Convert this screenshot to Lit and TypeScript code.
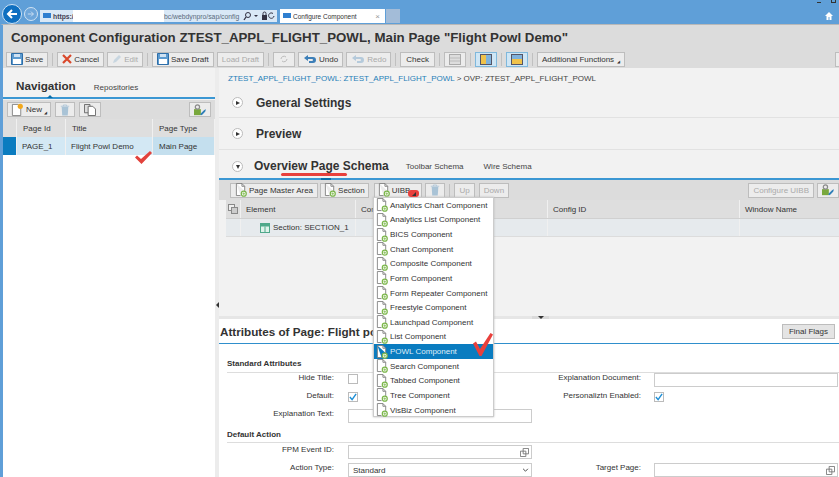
import { LitElement, html, css } from "lit";
import { customElement } from "lit/decorators.js";

const addDoc = () => html`<svg class="ic" viewBox="1 0 13 15" width="12" height="14"><path d="M2.500 .5h6l3 3v5M2.500 .5v13h4.500" fill="#fff" stroke="#777" stroke-width=".9"/><path d="M8.500 .5v3h3" fill="none" stroke="#777" stroke-width=".9"/><circle cx="10.500" cy="11.500" r="2.700" fill="#fff" stroke="#7ab648" stroke-width="1.300"/><path d="M10.500 10v3M9 11.500h3" stroke="#7ab648" stroke-width=".8"/></svg>`;
const newDoc = html`<svg class="ic" viewBox="1 0 14 15" width="13" height="14"><path d="M2.500 1.500h6l3 3v9h-9z" fill="#fff" stroke="#777" stroke-width=".9"/><circle cx="11" cy="3.500" r="2.800" fill="#f2a81d"/></svg>`;
const trash = (c = "#a9c3d6") => html`<svg viewBox="0 0 12 14" width="10" height="12"><path d="M1 2.500h10M4 2.500V1h4v1.500" stroke="${c}" fill="none"/><path d="M2 3.500h8l-.7 10H2.700z" fill="${c}"/></svg>`;
const settings = () => html`<svg viewBox="0 0 16 14" width="14" height="12"><rect x="1" y="6" width="8" height="7" fill="#79a83c"/><circle cx="5" cy="3.500" r="2.500" fill="none" stroke="#8a8a8a" stroke-width="1.400"/><path d="M8 12l5-5 2-1-1 3-4 4z" fill="#2f7fb8"/></svg>`;
const bigCheck = (w: number, h: number) => html`<svg viewBox="0 0 20 23" width="${w}" height="${h}"><path d="M0 10.500L3 8.500L7 16L17.500 0L20 1.500L8.500 23H6.500z" fill="#e8403c"/></svg>`;
const smallCheck = html`<svg viewBox="0 0 17 14" width="17" height="14"><path d="M0 7.500L2 5.500L6 9L15 1L17 3L6.500 14z" fill="#e2423c"/></svg>`;
const blueCheck = html`<svg viewBox="0 0 9 9" width="8" height="8"><path d="M1 4.500L3.500 7.500L8 1" fill="none" stroke="#1e8fd6" stroke-width="1.600"/></svg>`;
const copyIc = html`<svg viewBox="0 0 10 10" width="9" height="9"><path d="M3.500 .5h6v6h-6zM.5 3.500h6v6h-6z" fill="#fff" stroke="#777"/></svg>`;
const menuItems = ["Analytics Chart Component", "Analytics List Component", "BICS Component", "Chart Component", "Composite Component", "Form Component", "Form Repeater Component", "Freestyle Component", "Launchpad Component", "List Component", "POWL Component", "Search Component", "Tabbed Component", "Tree Component", "VisBiz Component"];

@customElement("app-root")
export class AppRoot extends LitElement {
  static styles = css`
    :host { display: block; width: 839px; height: 477px; overflow: hidden; position: relative; font-family: "Liberation Sans", Arial, sans-serif; color: #333; font-size: 8px; background: #f2f2f2; }
    * { box-sizing: border-box; }
    .chrome { height: 24px; background: #5f9fd8; display: flex; align-items: flex-start; position: relative; }
    .back { width: 20px; height: 20px; border-radius: 50%; background: #0f6fc0; border: 1px solid #cfe2f3; margin: 4px 0 0 2px; display: flex; align-items: center; justify-content: center; flex: none; }
    .fwd { width: 14px; height: 14px; border-radius: 50%; border: 1px solid #cfe2f3; background: #6ea6da; margin: 7px 0 0 2px; display: flex; align-items: center; justify-content: center; flex: none; }
    .addr { margin: 10px 0 0 2px; width: 237px; height: 12px; background: #d9e8f6; display: flex; align-items: center; font-size: 6.800px; color: #333; padding-left: 13px; position: relative; flex: none; }
    .addr .scheme { width: 20px; font-weight: bold; color: #445; }
    .addr .mask { width: 91px; height: 12px; background: #fff; flex: none; }
    .addr .tail { color: #5a6b7c; white-space: nowrap; }
    .addr .tools { position: absolute; right: 2px; top: 1px; }
    .sap { position: absolute; left: 3px; top: 3px; width: 8px; height: 5px; background: #2f7fd0; }
    .tab { margin: 9px 0 0 3px; width: 105px; height: 14px; background: #fff; display: flex; align-items: center; padding-left: 13px; font-size: 6.500px; color: #333; position: relative; flex: none; }
    .tab .sap { top: 4px; }
    .tab .x { position: absolute; right: 5px; color: #999; font-size: 8px; }
    .newtab { margin: 9px 0 0 1px; width: 14px; height: 14px; background: #a3bcd8; }
    .winicons { position: absolute; right: 0; top: 0; width: 30px; height: 24px; }
    .win-a { position: absolute; left: 8px; top: 2px; width: 4px; height: 1px; background: #333; }
    .win-b { position: absolute; left: 22px; top: 0; width: 5px; height: 3px; border: 1px solid #333; border-top: 0; }
    .win-c { position: absolute; left: 16px; top: 12px; }

    .title { height: 26px; background: #dcdcdc; border-top: 1px solid #b8b8b8; border-left: 3px solid #5f9fd8; padding: 5px 0 0 8px; font-size: 13.300px; font-weight: bold; color: #333; white-space: nowrap; }
    .bar { display: flex; align-items: center; gap: 3px; white-space: nowrap; }
    .mainbar { height: 18px; background: #dcdcdc; padding-left: 3px; border-left: 3px solid #5f9fd8; }
    .btn { height: 15px; border: 1px solid #bdbdbd; background: #ececec; display: flex; align-items: center; gap: 2px; padding: 0 4px; font-size: 8px; color: #333; flex: none; }
    .btn.off { color: #aaa; }
    .btn.on { background: #cfe6f5; border-color: #7fb8dc; }
    .btn.layout { width: 22px; padding: 0; justify-content: center; }
    .btn.wide { padding: 0 5px; }
    .tail-btn { margin-left: auto; margin-right: -6px; width: 10px; }
    .sep { width: 1px; height: 13px; background: #c0c0c0; margin: 0 1px; flex: none; }
    .body { display: flex; height: 409px; }
    .left { width: 215px; background: #f2f2f2; border-left: 3px solid #5f9fd8; flex: none; display: flex; flex-direction: column; }
    .tabs { height: 31px; display: flex; align-items: flex-end; padding: 0 0 5px 13px; gap: 18px; border-bottom: 2px solid #3b97d3; position: relative; flex: none; }
    .tabs b { font-size: 11.700px; color: #333; }
    .tabs span { font-size: 8px; color: #444; }
    .notch { position: absolute; left: 44px; bottom: -1px; width: 0; height: 0; border: 3px solid transparent; border-bottom-color: #0a6ea8; border-top: 0; }
    .ltool { height: 19px; background: #dcdcdc; padding: 0 4px; display: flex; align-items: center; gap: 4px; flex: none; margin-top: 1px; }
    .hdr { display: flex; height: 18px; background: #dedede; flex: none; }
    .hdr > div, .lrow > div { border-right: 1px solid #f0f0f0; display: flex; align-items: center; padding-left: 6px; font-size: 8px; white-space: nowrap; }
    .lrow { display: flex; height: 18px; background: #d3e8f4; flex: none; }
    .lrow .sel { background: #0a7cc0; }
    .lrow .typ { background: #c4dfee; }
    .c0 { width: 14px; padding: 0 !important; } .c1 { width: 49px; } .c2 { width: 87px; } .c3 { flex: 1; }
    .lrow .c1, .lrow .c2 { padding-left: 5px; }
    .lwhite { flex: 1; background: #fff; }
    .split { width: 4px; background: #ececec; flex: none; display: flex; align-items: flex-start; justify-content: center; padding-top: 234px; }
    .split i { width: 0; height: 0; border: 3px solid transparent; border-right-color: #333; border-left: 0; }
    .right { flex: 1; min-width: 0; display: flex; flex-direction: column; background: #f2f2f2; }
    .upper { height: 248px; flex: none; position: relative; }
    .crumb { height: 20px; padding: 6px 0 0 9px; font-size: 8px; white-space: nowrap; color: #444; }
    .crumb a { color: #1f7fb8; }
    .panel { height: 32px; display: flex; align-items: center; gap: 13px; padding-left: 13px; font-size: 12px; font-weight: bold; color: #333; border-bottom: 1px solid #e2e2e2; }
    .panel.first { height: 30px; }
    .circ { width: 11px; height: 11px; border-radius: 50%; background: #fff; border: 1px solid #bbb; display: flex; align-items: center; justify-content: center; flex: none; }
    .circ .r { width: 0; height: 0; border: 2.500px solid transparent; border-left: 4px solid #333; border-right: 0; }
    .circ .d { width: 0; height: 0; border: 2.500px solid transparent; border-top: 4px solid #333; border-bottom: 0; }
    .ovp { height: 30px; display: flex; align-items: flex-end; padding: 0 0 5px 13px; gap: 11px; border-bottom: 2px solid #3b97d3; position: relative; }
    .ovp b { font-size: 12px; margin-right: 6px; }
    .ovp .sub { font-size: 8px; padding-bottom: 2px; margin-right: 9px; color: #444; }
    .notch2 { position: absolute; left: 102px; bottom: -2px; width: 10px; height: 2px; background: #0a6ea8; }
    .utool { height: 20px; background: #dcdcdc; padding: 0 0 0 11px; }
    .utool .pma { margin-right: -1px; }
    .utool .sec { padding: 0 3px; margin-right: 2px; }
    .utool .uibb { padding: 0 11px 0 3px; }
    .utool .end { margin-left: auto; }
    .uh { display: flex; height: 19px; background: #dedede; margin-left: 7px; border-bottom: 1px solid #d0d0d0; }
    .ur { display: flex; height: 18px; background: #e6eaed; margin-left: 7px; border-bottom: 1px solid #dcdcdc; }
    .uh > div, .ur > div { border-right: 1px solid #f0f0f0; display: flex; align-items: center; padding-left: 5px; white-space: nowrap; flex: none; font-size: 8px; }
    .k0 { width: 15px; padding-left: 2px !important; } .k1 { width: 115px; } .k2 { width: 192px; } .k3 { width: 192px; } .k4 { width: 120px; }
    .ur .k1 { padding-left: 19px; gap: 3px; }
    .lower { flex: 1; background: #fff; border-top: 3px solid #e6e6e6; }
    .ah { height: 25px; display: flex; align-items: center; justify-content: space-between; padding: 0 4px 0 1px; border-bottom: 1px solid #2f8fcc; }
    .ah b { font-size: 11.700px; color: #333; }
    .ah .btn { background: #e4e4e4; padding: 0 6px; }
    .content { padding-left: 8px; }
    .group { height: 29px; padding-top: 15px; font-size: 8px; font-weight: bold; border-bottom: 1px solid #ddd; color: #333; line-height: 10px; }
    .group.second { height: 16px; padding-top: 3px; }
    .form { display: grid; grid-template-columns: 107px 14px 184px 109px 13px 184px; align-items: start; grid-auto-rows: 18px; }
    .form.second { margin-top: 2px; }
    .lbl { text-align: right; font-size: 8px; line-height: 10px; white-space: nowrap; }
    .input { height: 14px; border: 1px solid #ccc; background: #fff; display: flex; align-items: center; justify-content: flex-end; padding: 0 2px 0 4px; font-size: 8px; }
    .input.sel { justify-content: space-between; }
    .cb { width: 10px; height: 10px; border: 1px solid #bbb; background: #fff; display: flex; align-items: center; justify-content: center; margin-top: 1px; }
    .menu { position: absolute; left: 373px; top: 197px; width: 121px; height: 220px; background: #fff; border: 1px solid #ccc; box-shadow: 0 0 2px #bbb; z-index: 5; }
    .mi { height: 14.640px; display: flex; align-items: center; gap: 2px; padding-left: 2px; font-size: 8px; color: #333; white-space: nowrap; }
    .mi.active { background: #0a7cc0; color: #dfeef8; }
    .ic { flex: none; }
    .mark { position: absolute; z-index: 6; display: block; line-height: 0; }
    .under { position: absolute; left: 281px; top: 173px; width: 66px; height: 3px; border-radius: 2px; background: #e8403c; z-index: 6; }
    .blob { position: absolute; left: 408px; top: 190px; width: 11px; height: 7px; background: #e8403c; border-radius: 3px; z-index: 7; display: flex; align-items: center; justify-content: center; }
    .blob i { width: 0; height: 0; border: 2px solid transparent; border-bottom-color: #333; border-right-color: #333; }
    .drag { position: absolute; left: 532px; top: 316px; width: 17px; height: 3px; background: #dadada; z-index: 4; display: flex; justify-content: center; }
    .drag i { width: 0; height: 0; border: 3px solid transparent; border-top: 3px solid #333; border-bottom: 0; }
  `;

  private btn(label: string, icon: unknown = null, cls = "") {
    return html`<div class="btn ${cls}">${icon}${label}</div>`;
  }

  render() {
    const floppy = html`<svg viewBox="0 0 12 12" width="12" height="12"><path d="M.5 .5h11v11H.5z" fill="#5d9bd0" stroke="#2e6ea8"/><rect x="3" y="1" width="6" height="3" fill="#cfe2f3"/><rect x="2" y="6" width="8" height="5" fill="#fff"/></svg>`;
    const cross = html`<svg viewBox="0 0 10 10" width="10" height="10"><path d="M1 1l8 8M9 1l-8 8" stroke="#d9482b" stroke-width="2.200"/></svg>`;
    const pen = html`<svg viewBox="0 0 10 10" width="10" height="10"><path d="M1 9l1-3 5-5 2 2-5 5z" fill="#c8d6e0"/></svg>`;
    const undo = (c: string) => html`<svg viewBox="0 0 14 10" width="14" height="10"><path d="M1 4l4-3v2h5q3 0 3 3t-3 3H6V7h3q1 0 1-1t-1-1H5v2z" fill="${c}"/></svg>`;
    const layout = (inner: unknown, on = true) => html`<div class="btn layout ${on ? "on" : "off"}">${inner}</div>`;
    return html`
      <div class="chrome">
        <div class="back"><svg viewBox="0 0 12 12" width="12" height="12"><path d="M11 6H2M6 2L2 6l4 4" stroke="#fff" stroke-width="2" fill="none"/></svg></div>
        <div class="fwd"><svg viewBox="0 0 10 10" width="8" height="8"><path d="M1 5h7M5 2l3 3-3 3" stroke="#dbe9f6" fill="none"/></svg></div>
        <div class="addr"><span class="sap"></span><span class="scheme">https:/</span><span class="mask"></span><span class="tail">bc/webdynpro/sap/config</span>
          <svg class="tools" viewBox="0 0 33 10" width="33" height="10"><circle cx="6" cy="4" r="2.500" fill="none" stroke="#334"/><path d="M4 6L2 9" stroke="#334" stroke-width="1.300"/><path d="M12 4h4l-2 2z" fill="#334"/><rect x="20" y="4" width="5" height="5" fill="#334"/><path d="M21 4V2.500a1.500 1.500 0 0 1 3 0V4" fill="none" stroke="#334"/><path d="M32 5a2.700 2.700 0 1 1-1-2.500" fill="none" stroke="#334"/></svg></div>
        <div class="tab"><span class="sap"></span>Configure Component<span class="x">×</span></div>
        <div class="newtab"></div>
        <div class="winicons"><i class="win-a"></i><i class="win-b"></i><svg class="win-c" viewBox="0 0 8 8" width="8" height="8"><path d="M4 0L0 4h1.500v4h2V5h1v3h2V4H8z" fill="#fff"/></svg></div>
      </div>
      <div class="title">Component Configuration ZTEST_APPL_FLIGHT_POWL, Main Page "Flight Powl Demo"</div>
      <div class="bar mainbar">
        ${this.btn("Save", floppy)}<div class="sep"></div>
        ${this.btn("Cancel", cross)}${this.btn("Edit", pen, "off")}<div class="sep"></div>
        ${this.btn("Save Draft", floppy)}${this.btn("Load Draft", null, "off")}<div class="sep"></div>
        <div class="btn off wide" style="gap:0"><svg viewBox="0 0 10 10" width="10" height="10"><path d="M2 5a3 3 0 0 1 5-2M8 5a3 3 0 0 1-5 2" stroke="#bbb" fill="none"/></svg></div>
        ${this.btn("Undo", undo("#3d7fb8"))}${this.btn("Redo", undo("#b5cadb"), "off")}<div class="sep"></div>
        <div class="btn wide">Check</div><div class="sep"></div>
        ${layout(html`<svg viewBox="0 0 12 11" width="12" height="11"><rect x=".5" y=".5" width="11" height="10" fill="#ddd" stroke="#aaa"/><path d="M1 4h10M1 7h10" stroke="#bbb"/></svg>`, false)}<div class="sep"></div>
        ${layout(html`<svg viewBox="0 0 12 11" width="12" height="11"><rect x=".5" y=".5" width="11" height="10" fill="#f0c24a" stroke="#556"/><rect x="6" y="1" width="5" height="9" fill="#7fb2dc"/></svg>`)}<div class="sep"></div>
        ${layout(html`<svg viewBox="0 0 12 11" width="12" height="11"><rect x=".5" y=".5" width="11" height="10" fill="#f0c24a" stroke="#556"/><rect x="1" y="1" width="10" height="4" fill="#7fb2dc"/></svg>`)}<div class="sep"></div>
        <div class="btn">Additional Functions <span style="font-size:4px;margin:5px 0 0 1px">◢</span></div>
        <div class="btn off tail-btn"></div>
      </div>
      <div class="body">
        <div class="left">
          <div class="tabs"><b>Navigation</b><span>Repositories</span><i class="notch"></i></div>
          <div class="ltool">
            <div class="btn" style="padding:0 3px">${newDoc}New <span style="font-size:4px;margin-top:6px">◢</span></div>
            <div class="btn off">${trash()}</div>
            <div class="btn off">${html`<svg viewBox="0 0 13 13" width="12" height="12"><path d="M.5 .5h6v9h-6z" fill="#ddd" stroke="#666"/><path d="M4.500 2.500h5l3 3v7h-8z" fill="#fff" stroke="#666"/></svg>`}</div>
            <div class="btn" style="margin-left:auto;padding:0 3px">${settings()}</div>
          </div>
          <div class="hdr"><div class="c0"></div><div class="c1">Page Id</div><div class="c2">Title</div><div class="c3">Page Type</div></div>
          <div class="lrow"><div class="c0 sel"></div><div class="c1">PAGE_1</div><div class="c2">Flight Powl Demo</div><div class="c3 typ">Main Page</div></div>
          <div class="lwhite"></div>
        </div>
        <div class="split"><i></i></div>
        <div class="right">
          <div class="upper">
            <div class="crumb"><a>ZTEST_APPL_FLIGHT_POWL: ZTEST_APPL_FLIGHT_POWL</a> &gt; OVP: ZTEST_APPL_FLIGHT_POWL</div>
            <div class="panel first"><span class="circ"><i class="r"></i></span>General Settings</div>
            <div class="panel"><span class="circ"><i class="r"></i></span>Preview</div>
            <div class="ovp"><span class="circ" style="margin-bottom:1px"><i class="d"></i></span><b>Overview Page Schema</b><span class="sub">Toolbar Schema</span><span class="sub">Wire Schema</span><i class="notch2"></i></div>
            <div class="bar utool">
              <div class="btn pma">${addDoc()}Page Master Area</div>
              <div class="btn sec">${addDoc()}Section</div>
              <div class="btn uibb">${addDoc()}UIBB</div>
              <div class="btn off">${trash()}</div><div class="sep"></div>
              <div class="btn off" style="margin-right:1px">Up</div>${this.btn("Down", null, "off")}
              <div class="btn off end">Configure UIBB</div><div class="btn" style="padding:0 3px">${settings()}</div>
            </div>
            <div class="uh"><div class="k0"><svg viewBox="0 0 10 10" width="10" height="10"><rect x=".5" y=".5" width="6" height="6" fill="#eee" stroke="#888"/><rect x="3.500" y="3.500" width="6" height="6" fill="#ccc" stroke="#888"/></svg></div><div class="k1">Element</div><div class="k2">Component</div><div class="k3">Config ID</div><div class="k4">Window Name</div></div>
            <div class="ur"><div class="k0"></div><div class="k1"><svg viewBox="0 0 10 10" width="10" height="10"><rect width="10" height="10" fill="#4fa88a"/><path d="M1 3.500h8v5.500H1z" fill="#dff2ea"/><path d="M5 3.500V9" stroke="#4fa88a"/></svg>Section: SECTION_1</div><div class="k2"></div><div class="k3"></div><div class="k4"></div></div>
          </div>
          <div class="lower">
            <div class="ah"><b>Attributes of Page: Flight powl Demo</b><div class="btn">Final Flags</div></div>
            <div class="content">
              <div class="group">Standard Attributes</div>
              <div class="form">
                <div class="lbl">Hide Title:</div><div></div><div><span class="cb"></span></div><div class="lbl">Explanation Document:</div><div></div><div class="input"></div>
                <div class="lbl">Default:</div><div></div><div><span class="cb">${blueCheck}</span></div><div class="lbl">Personaliztn Enabled:</div><div></div><div><span class="cb">${blueCheck}</span></div>
                <div class="lbl">Explanation Text:</div><div></div><div class="input"></div><div></div><div></div><div></div>
              </div>
              <div class="group second">Default Action</div>
              <div class="form second">
                <div class="lbl">FPM Event ID:</div><div></div><div class="input">${copyIc}</div><div></div><div></div><div></div>
                <div class="lbl">Action Type:</div><div></div><div class="input sel">Standard<svg viewBox="0 0 8 5" width="7" height="4"><path d="M1 1l3 3 3-3" fill="none" stroke="#444" stroke-width="1.200"/></svg></div><div class="lbl">Target Page:</div><div></div><div class="input">${copyIc}</div>
              </div>
            </div>
          </div>
        </div>
      </div>
      <div class="menu">
        ${menuItems.map((m) => html`<div class="mi ${m.startsWith("POWL") ? "active" : ""}">${addDoc()}${m}</div>`)}
      </div>
      <i class="under"></i><i class="blob"><i></i></i><div class="drag"><i></i></div>
      <span class="mark" style="left:135px;top:150px">${smallCheck}</span>
      <span class="mark" style="left:473px;top:333px">${bigCheck(20, 23)}</span>
    `;
  }
}
